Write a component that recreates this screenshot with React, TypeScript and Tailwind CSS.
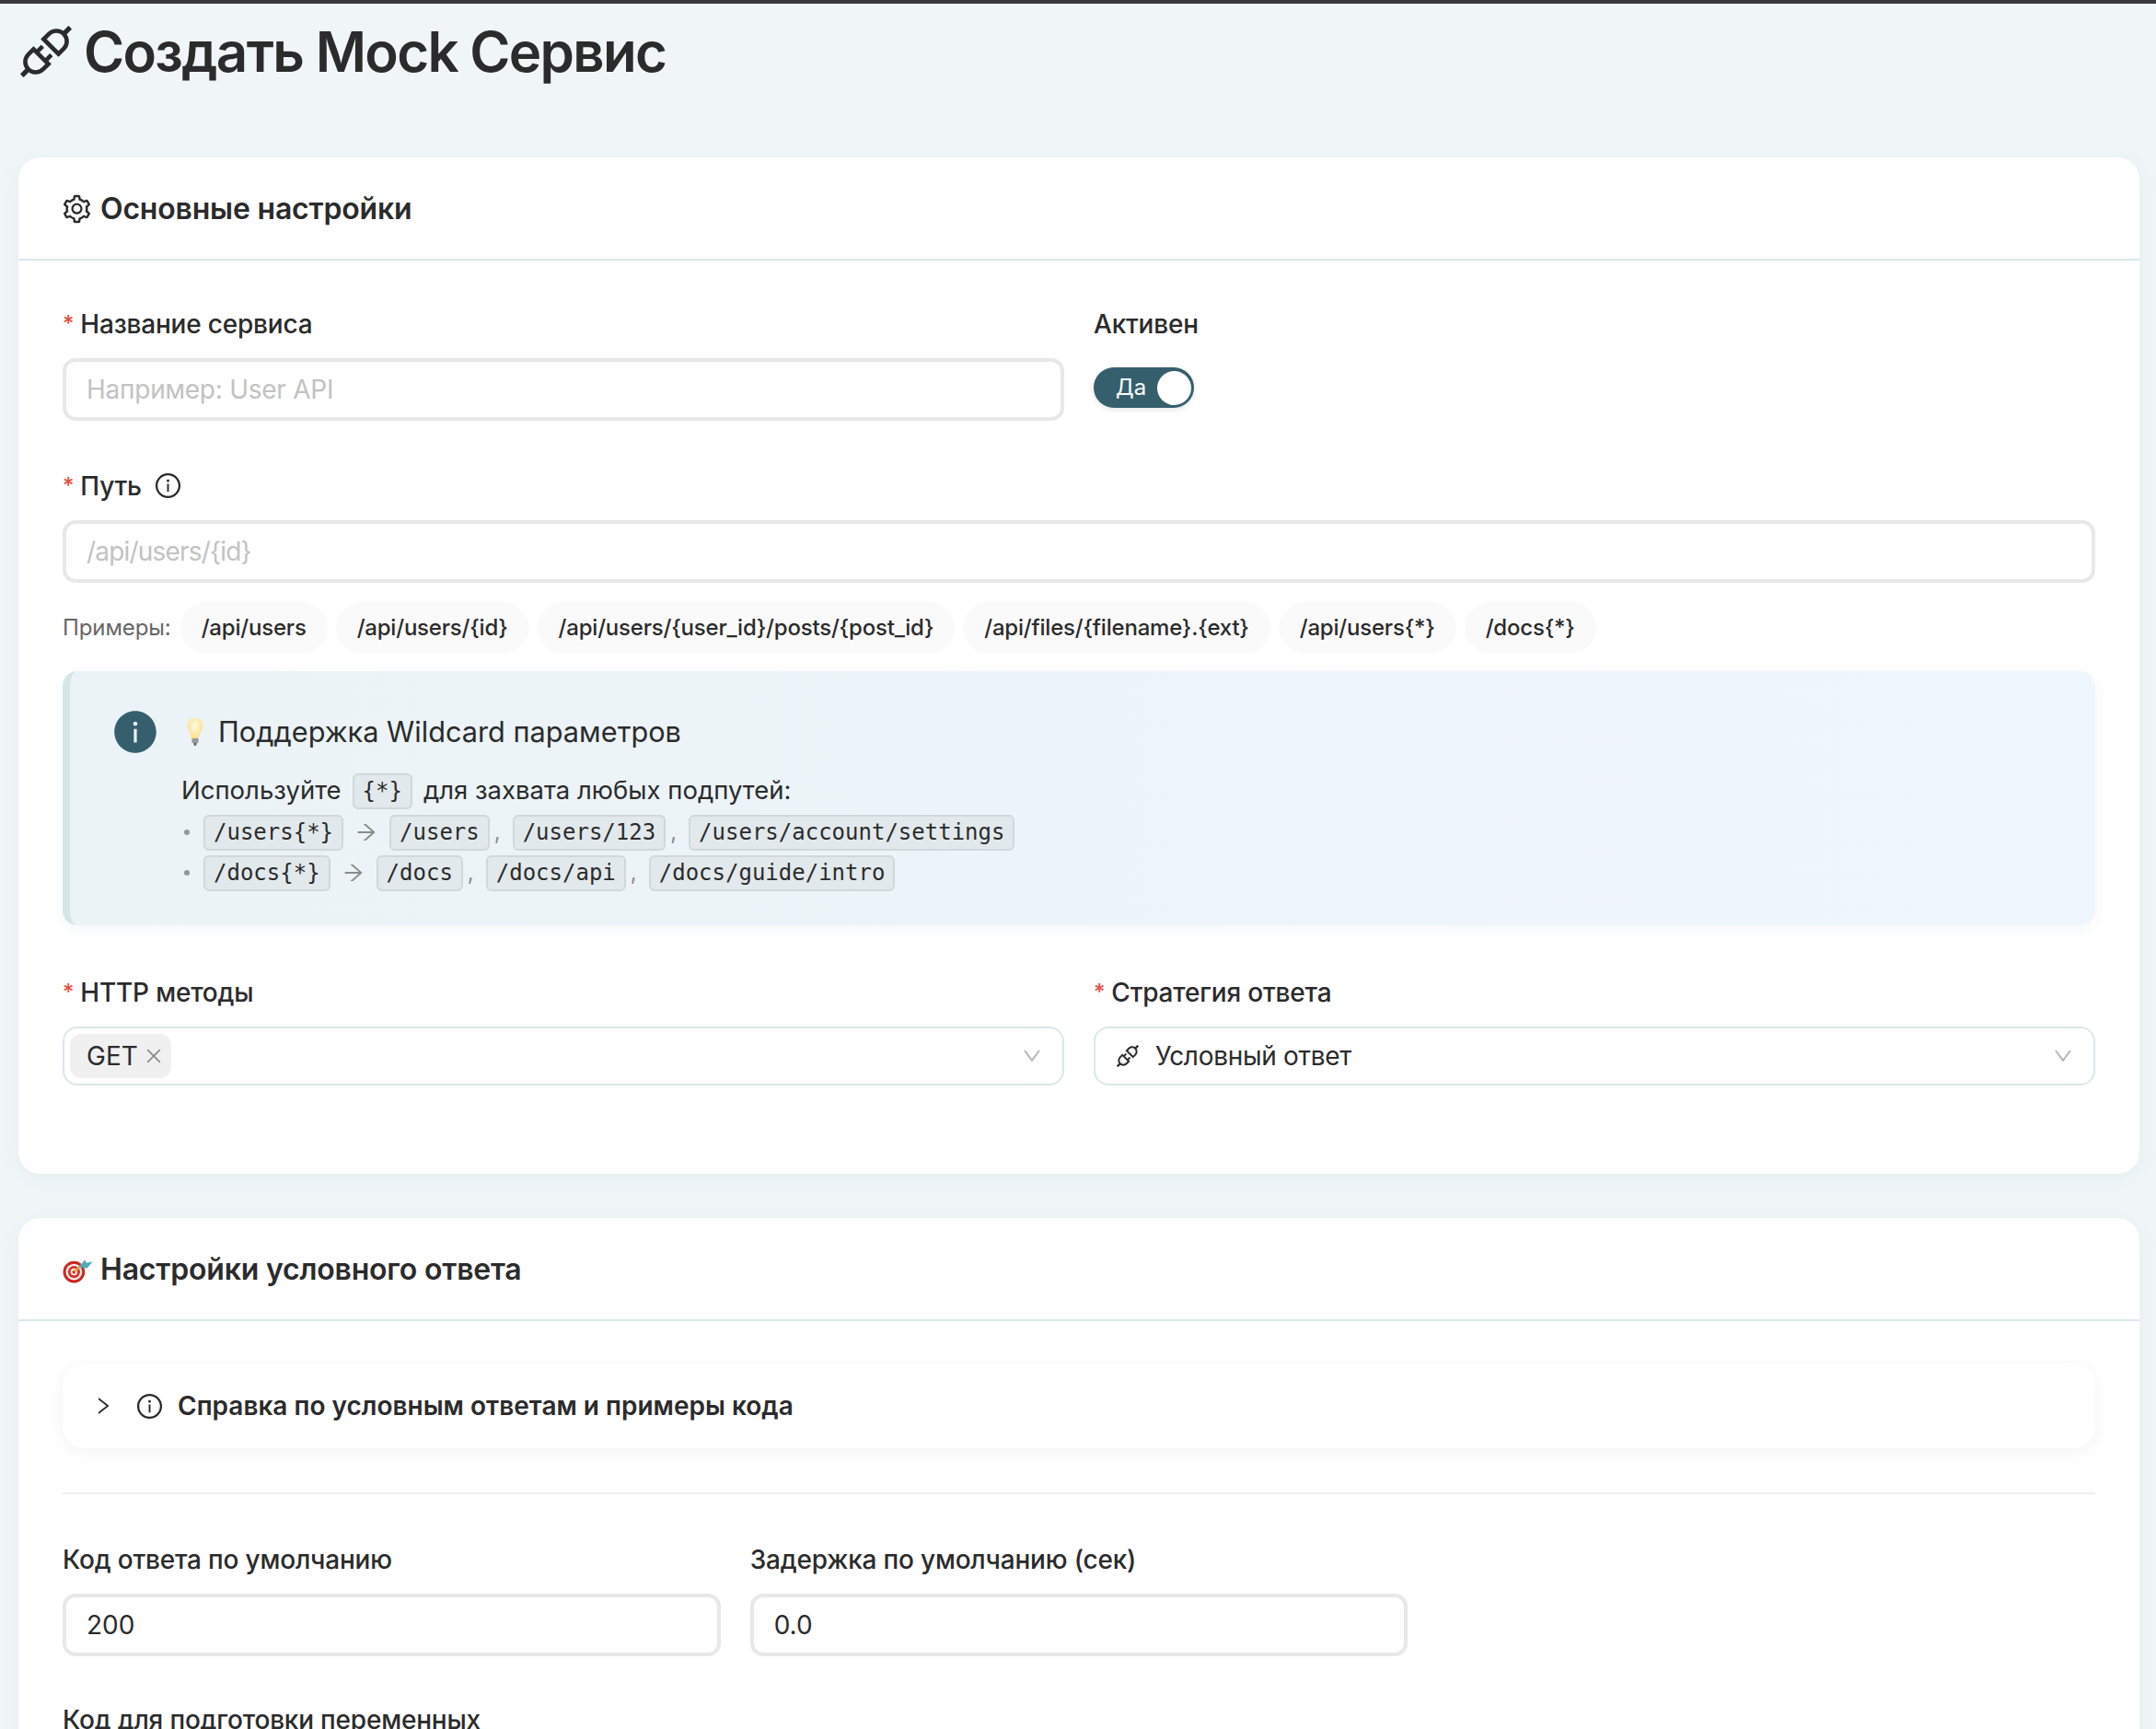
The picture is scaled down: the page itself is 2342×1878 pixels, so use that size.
import type { ReactNode } from "react";
import {
  AiFillInfoCircle,
  AiOutlineApi,
  AiOutlineArrowRight,
  AiOutlineClose,
  AiOutlineDown,
  AiOutlineInfoCircle,
  AiOutlineRight,
  AiOutlineSetting,
} from "react-icons/ai";

const pathExamples = [
  "/api/users",
  "/api/users/{id}",
  "/api/users/{user_id}/posts/{post_id}",
  "/api/files/{filename}.{ext}",
  "/api/users{*}",
  "/docs{*}",
];

function Label({ children, required }: { children: ReactNode; required?: boolean }) {
  return (
    <label className="mb-[14px] flex h-[44px] items-center pb-[3px] text-[28px] font-medium tracking-[-0.2px] text-[#2b2b2b]">
      {required && <span className="mr-[7px] text-[24px] text-[#e8503f]">*</span>}
      {children}
    </label>
  );
}

function TextInput({ placeholder, value, tight }: { placeholder?: string; value?: string; tight?: boolean }) {
  return (
    <input
      readOnly
      placeholder={placeholder}
      value={value}
      className={`block h-[68px] w-full rounded-[14px] border-[4px] border-[#e8e8e8] bg-white px-[22px] text-[28px] text-[#2b2b2b] outline-none placeholder:text-[#c2c2c2] ${
        tight ? "placeholder:tracking-[-0.8px]" : "placeholder:tracking-[-0.25px]"
      }`}
    />
  );
}

function Code({ children }: { children: ReactNode }) {
  return (
    <code className="inline-block h-[39px] rounded-[6px] border-2 border-[#cfd8db] bg-[#e2e9ec] px-[9px] font-['DejaVu_Sans_Mono',monospace] text-[24px] leading-[35px] text-[#2b2b2b]">
      {children}
    </code>
  );
}

function Sep() {
  return <span className="ml-[5px] mr-[13px] text-[24px] text-[#8a8a8a]">,</span>;
}

function Bullet({ from, to }: { from: string; to: string[] }) {
  return (
    <div className="flex h-[44px] items-center">
      <span className="ml-[3px] mr-[15px] h-[6px] w-[6px] rounded-full bg-[#8f9a9e]" />
      <Code>{from}</Code>
      <AiOutlineArrowRight className="mx-[12px] text-[26px] text-[#8a8a8a]" />
      {to.map((t, i) => (
        <span key={t} className="flex items-center">
          <Code>{t}</Code>
          {i < to.length - 1 && <Sep />}
        </span>
      ))}
    </div>
  );
}

function Card({ icon, title, children, className }: { icon: ReactNode; title: string; children: ReactNode; className?: string }) {
  return (
    <section className={`rounded-[24px] bg-white shadow-[0_4px_24px_rgba(40,80,100,0.05)] ${className ?? ""}`}>
      <header className="flex h-[112px] items-center border-b-2 border-[#d9e8ea] px-[48px] pt-[2px]">
        <span className="mr-[8px] flex w-[33px] items-center">{icon}</span>
        <h2 className="text-[32px] font-semibold tracking-[-0.2px] text-[#2b2b2b]">{title}</h2>
      </header>
      {children}
    </section>
  );
}

function SelectBox({ children }: { children: ReactNode }) {
  return (
    <div className="flex h-[64px] items-center justify-between rounded-[16px] border-2 border-[#d9e8ea] bg-white pr-[21px]">
      <div className="flex items-center">{children}</div>
      <AiOutlineDown className="text-[24px] text-[#b5b5b5]" />
    </div>
  );
}

function BulbEmoji() {
  return (
    <svg viewBox="0 0 20 32" className="h-[32px] w-[20px]">
      <defs>
        <radialGradient id="bulb" cx="50%" cy="40%" r="60%">
          <stop offset="0%" stopColor="#fffbe0" />
          <stop offset="100%" stopColor="#fbe08a" />
        </radialGradient>
      </defs>
      <path d="M10 1C4.8 1 1.5 5 1.5 9.6c0 4.6 3.6 7.4 4.8 13.4h7.4c1.2-6 4.8-8.8 4.8-13.4C18.5 5 15.2 1 10 1z" fill="url(#bulb)" />
      <rect x="6.4" y="23" width="7.2" height="5" rx="1" fill="#9a9a9a" />
      <path d="M8 28h4l-1 3H9z" fill="#6d6d6d" />
    </svg>
  );
}

function DartEmoji() {
  return (
    <svg viewBox="0 0 32 28" className="h-[29px] w-[33px]">
      <circle cx="12" cy="16" r="11.5" fill="#c8281f" />
      <circle cx="12" cy="16" r="8.6" fill="#fbeeee" />
      <circle cx="12" cy="16" r="6.4" fill="#d2352b" />
      <circle cx="12" cy="16" r="3.6" fill="#fbeeee" />
      <circle cx="12" cy="16" r="1.8" fill="#d2352b" />
      <path d="M12.5 15.5L21 8" stroke="#e8a33a" strokeWidth="2.2" />
      <path d="M17 11l6.5-8 1.5 3.6L31.5 5l-5.5 7-4-.4z" fill="#4fa9bd" />
    </svg>
  );
}

export default function App() {
  return (
    <div className="h-[1878px] overflow-hidden border-t-[4px] border-[#3a3a3a] bg-[#f0f6f8] pl-[20px] pr-[18px] font-['Inter',sans-serif] text-[#2b2b2b]">
      <h1 className="mb-[63px] flex h-[104px] items-center text-[60px] font-semibold tracking-[-1.7px] text-[#2b2b2b]">
        <AiOutlineApi className="ml-[-5px] mr-[6px] text-[70px]" />
        Создать Mock Сервис
      </h1>

      <Card icon={<AiOutlineSetting className="ml-[-2px] text-[36px]" />} title="Основные настройки" className="mb-[48px]">
        <div className="p-[48px]">
          <div className="mb-[50px] grid grid-cols-2 gap-[32px]">
            <div>
              <Label required>Название сервиса</Label>
              <TextInput placeholder="Например: User API" />
            </div>
            <div>
              <Label>Активен</Label>
              <div className="mt-[24px] flex h-[44px] w-[109px] items-center justify-between rounded-full bg-[#365f6e] pl-[24px] pr-[3px] text-[24px] text-white shadow-[0_2px_6px_rgba(0,0,0,0.1)]">
                Да
                <span className="h-[37px] w-[37px] rounded-full bg-white" />
              </div>
            </div>
          </div>

          <Label required>
            Путь
            <AiOutlineInfoCircle className="ml-[13px] text-[31px]" />
          </Label>
          <TextInput tight placeholder="/api/users/{id}" />

          <div className="mb-[19px] mt-[21px] flex items-center gap-[9px] text-[24px]">
            <span className="mr-[1px] tracking-[-0.1px] text-[#666]">Примеры:</span>
            {pathExamples.map((p) => (
              <span key={p} className="flex h-[56px] items-center rounded-[28px] bg-[#fafafa] px-[23px] font-medium tracking-[-0.2px]">
                {p}
              </span>
            ))}
          </div>

          <div className="mb-[52px] flex h-[276px] rounded-[16px] border-l-[8px] border-[#d5e6e9] bg-gradient-to-r from-[#ebf3f6] to-[#f0f6fd] pl-[45px] pt-[40px] shadow-[0_4px_16px_rgba(40,80,100,0.05)]">
            <AiFillInfoCircle className="mr-[24px] shrink-0 text-[52px] text-[#365f6e]" />
            <div>
              <div className="mb-[18px] flex h-[52px] items-center text-[30.7px]">
                <span className="ml-[5px] mr-[15px] flex"><BulbEmoji /></span>
                Поддержка Wildcard параметров
              </div>
              <div className="flex h-[40px] items-center text-[27.5px]">
                Используйте
                <span className="mx-[12px] flex"><Code>{"{*}"}</Code></span>
                для захвата любых подпутей:
              </div>
              <div className="mt-[3px]">
                <Bullet from="/users{*}" to={["/users", "/users/123", "/users/account/settings"]} />
                <Bullet from="/docs{*}" to={["/docs", "/docs/api", "/docs/guide/intro"]} />
              </div>
            </div>
          </div>

          <div className="mb-[48px] grid grid-cols-2 gap-[32px]">
            <div>
              <Label required>HTTP методы</Label>
              <SelectBox>
                <span className="ml-[6px] flex h-[48px] w-[110px] items-center rounded-[12px] bg-[#f0f0f0] pl-[18px] text-[28px]">
                  GET
                  <AiOutlineClose className="ml-[6px] text-[22px] text-[#8c8c8c]" />
                </span>
              </SelectBox>
            </div>
            <div>
              <Label required>Стратегия ответа</Label>
              <SelectBox>
                <AiOutlineApi className="ml-[20px] mr-[15px] text-[30px]" />
                <span className="text-[28px] tracking-[-0.3px]">Условный ответ</span>
              </SelectBox>
            </div>
          </div>
        </div>
      </Card>

      <Card icon={<DartEmoji />} title="Настройки условного ответа">
        <div className="px-[48px] pb-[48px] pt-[46px]">
          <div className="mb-[48px] flex h-[92px] items-center rounded-[24px] bg-white pl-[32px] shadow-[0_4px_20px_rgba(0,0,0,0.05)]">
            <AiOutlineRight className="mr-[23px] text-[24px]" />
            <AiOutlineInfoCircle className="mr-[15px] text-[31px]" />
            <span className="text-[28px] font-semibold">Справка по условным ответам и примеры кода</span>
          </div>
          <div className="mb-[50px] h-[2px] bg-[#f0f0f0]" />
          <div className="mb-[48px] grid grid-cols-3 gap-[32px]">
            <div>
              <Label>Код ответа по умолчанию</Label>
              <TextInput value="200" />
            </div>
            <div>
              <Label>Задержка по умолчанию (сек)</Label>
              <TextInput value="0.0" />
            </div>
          </div>
          <Label>Код для подготовки переменных</Label>
        </div>
      </Card>
    </div>
  );
}
